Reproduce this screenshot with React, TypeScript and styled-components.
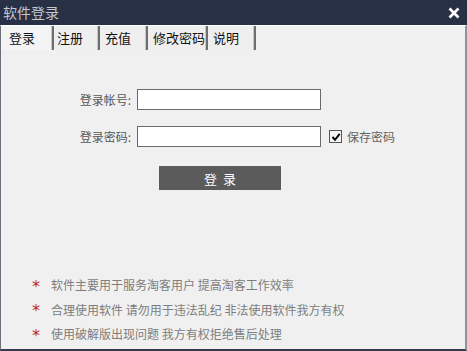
import React from "react";
import styled, { createGlobalStyle } from "styled-components";

const Global = createGlobalStyle`
  html, body { margin: 0; padding: 0; overflow: hidden; background: #f0f0f0; }
  * { box-sizing: border-box; }
`;

const FONT = `"Noto Sans CJK SC", "Noto Sans", sans-serif`;

const Window = styled.div`
  width: 467px;
  height: 351px;
  display: flex;
  flex-direction: column;
  background: #283046;
  font-family: ${FONT};
`;

const TitleBar = styled.div`
  height: 25px;
  flex: none;
  display: flex;
  align-items: center;
  justify-content: space-between;
  padding: 0 7px 0 3px;
`;

const Title = styled.span`
  color: #c4c8d0;
  font-size: 14px;
  line-height: 25px;
`;

const Body = styled.div`
  flex: 1;
  display: flex;
  flex-direction: column;
  background: #f0f0f0;
  border-left: 1px solid #6a6f7a;
  border-right: 2px solid #8f939a;
  border-bottom: 2px solid #353c4d;
  border-top: 1px solid #ffffff;
`;

const TabRow = styled.div`
  display: flex;
  height: 24px;
  flex: none;
`;

const Tab = styled.div<{ $w: number; $pl: number; $active?: boolean }>`
  width: ${(p) => p.$w}px;
  padding-left: ${(p) => p.$pl}px;
  padding-bottom: 1px;
  height: 100%;
  display: flex;
  align-items: center;
  font-size: 13px;
  color: #111;
  background: ${(p) => (p.$active ? "#f4f4f4" : "#efefef")};
  border-right: 2px solid #6e6e6e;
  box-shadow: inset -1px 0 0 #c8c8c8;
`;

const Form = styled.div`
  margin-top: 39px;
  display: grid;
  grid-template-columns: 130px 184px auto;
  column-gap: 6px;
  row-gap: 16px;
  align-items: center;
`;

const Label = styled.label`
  justify-self: end;
  font-size: 12px;
  color: #585858;
`;

const Input = styled.div`
  width: 184px;
  height: 21px;
  background: #fff;
  border: 1px solid #6a6a6a;
`;

const Remember = styled.div`
  display: flex;
  align-items: center;
  gap: 5px;
  margin-left: 2px;
  font-size: 12px;
  color: #636363;
`;

const CheckBox = styled.span`
  width: 13px;
  height: 13px;
  border: 1px solid #555;
  background: #f4f4f4;
  display: flex;
  align-items: center;
  justify-content: center;
`;

const ButtonRow = styled.div`
  margin-top: 19px;
  padding-left: 158px;
`;

const LoginButton = styled.div`
  width: 122px;
  height: 24px;
  background: #5b5b5b;
  color: #fff;
  font-size: 13px;
  display: flex;
  align-items: center;
  justify-content: center;
  letter-spacing: 6px;
  padding-left: 6px;
`;

const Notes = styled.div`
  margin-top: auto;
  padding: 0 0 3px 31px;
  display: flex;
  flex-direction: column;
`;

const Note = styled.div`
  height: 24.5px;
  display: flex;
  align-items: center;
  font-size: 12px;
  color: #7d7d7d;
`;

const Star = styled.span`
  width: 19px;
  flex: none;
  color: #c0282a;
  font-size: 16px;
  line-height: 12px;
  padding-top: 4px;
  font-family: "DejaVu Sans", sans-serif;
`;

const tabs = [
  { t: "登录", w: 53, pl: 8, active: true },
  { t: "注册", w: 46, pl: 3 },
  { t: "充值", w: 48, pl: 5 },
  { t: "修改密码", w: 60, pl: 5 },
  { t: "说明", w: 48, pl: 5 },
];

const notes = [
  "软件主要用于服务淘客用户 提高淘客工作效率",
  "合理使用软件 请勿用于违法乱纪 非法使用软件我方有权",
  "使用破解版出现问题 我方有权拒绝售后处理",
];

export default function App() {
  return (
    <>
      <Global />
      <Window>
        <TitleBar>
          <Title>软件登录</Title>
          <svg width="12" height="12" viewBox="0 0 12 12">
            <path d="M1.5 1.5 L10.5 10.5 M10.5 1.5 L1.5 10.5" stroke="#fff" strokeWidth="2.6" />
          </svg>
        </TitleBar>
        <Body>
          <TabRow>
            {tabs.map((x) => (
              <Tab key={x.t} $w={x.w} $pl={x.pl} $active={x.active}>
                {x.t}
              </Tab>
            ))}
          </TabRow>
          <Form>
            <Label>登录帐号:</Label>
            <Input />
            <span />
            <Label>登录密码:</Label>
            <Input />
            <Remember>
              <CheckBox>
                <svg width="10" height="10" viewBox="0 0 10 10">
                  <path d="M1.5 5 L4 7.8 L8.7 1.8" stroke="#000" strokeWidth="1.9" fill="none" />
                </svg>
              </CheckBox>
              保存密码
            </Remember>
          </Form>
          <ButtonRow>
            <LoginButton>登录</LoginButton>
          </ButtonRow>
          <Notes>
            {notes.map((n) => (
              <Note key={n}>
                <Star>*</Star>
                {n}
              </Note>
            ))}
          </Notes>
        </Body>
      </Window>
    </>
  );
}
